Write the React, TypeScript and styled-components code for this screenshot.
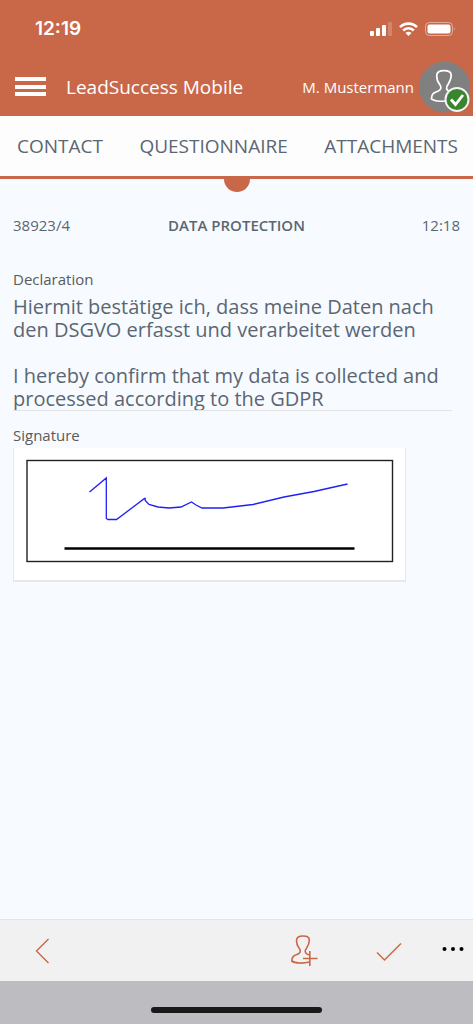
import React from "react";
import styled, { createGlobalStyle } from "styled-components";

const accent = "#c96849";
const ink = "#5b6673";

const GlobalStyle = createGlobalStyle`
  *, *::before, *::after { box-sizing: border-box; }
  body {
    margin: 0;
    background: #f7fbff;
    color: ${ink};
    font-family: "Open Sans", "Noto Sans", sans-serif;
  }
  button, textarea { font: inherit; color: inherit; }
`;

const Screen = styled.div`
  display: flex;
  flex-direction: column;
  min-height: 100vh;
`;

const Header = styled.header`
  background: ${accent};
  color: #fff;
`;

const StatusBar = styled.div`
  display: flex;
  align-items: center;
  justify-content: space-between;
  height: 58px;
  padding: 0 17px 0 35px;
`;

const Clock = styled.time`
  font-family: Inter, sans-serif;
  font-size: 19px;
  font-weight: 600;
  line-height: 26px;
`;

const StatusIcons = styled.div`
  display: flex;
  align-items: center;
  gap: 7px;
`;

const TitleBar = styled.div`
  display: flex;
  align-items: center;
  height: 58px;
  padding: 0 3px 0 15px;
`;

const IconButton = styled.button`
  display: flex;
  align-items: center;
  justify-content: center;
  flex: none;
  padding: 0;
  border: 0;
  background: none;
  cursor: pointer;
`;

const AppTitle = styled.h1`
  flex: 1;
  margin: 0 0 0 20px;
  font-size: 19px;
  font-weight: 400;
  line-height: 26px;
  white-space: nowrap;
`;

const UserName = styled.span`
  margin-right: 5px;
  font-size: 15px;
  line-height: 22px;
  white-space: nowrap;
`;

const Tabs = styled.nav`
  position: relative;
  display: flex;
  align-items: center;
  justify-content: space-between;
  height: 63px;
  padding: 0 15px 0 17px;
  background: #fdfdfd;
  border-bottom: 3px solid ${accent};

  &::after {
    content: "";
    position: absolute;
    top: calc(100% + 3px);
    left: 50%;
    width: 26px;
    height: 13px;
    margin-left: -13px;
    border-radius: 0 0 13px 13px;
    background: ${accent};
  }
`;

const Tab = styled.a`
  color: ${ink};
  font-size: 19px;
  line-height: 26px;
  text-decoration: none;
  white-space: nowrap;
`;

const Content = styled.main`
  flex: 1;
  padding: 35px 13px 24px;
`;

const Summary = styled.div`
  display: grid;
  grid-template-columns: 1fr auto 1fr;
  font-size: 15px;
  line-height: 22px;
`;

const PageTitle = styled.h2`
  margin: 0;
  font-size: 15px;
  font-weight: 600;
`;

const SummaryEnd = styled.time`
  text-align: right;
`;

const Field = styled.div`
  display: flex;
  flex-direction: column;
`;

const Label = styled.label`
  color: #5a5a5a;
  font-size: 15px;
  line-height: 22px;
`;

const Declaration = styled(Field)`
  margin: 32px 8px 13px 0;
`;

const DeclarationText = styled.textarea`
  display: block;
  width: 100%;
  margin-top: 5px;
  padding: 0;
  border: 0;
  border-bottom: 1px solid #e2e4e6;
  border-radius: 0;
  outline: 0;
  background: none;
  font-size: 20px;
  line-height: 23px;
  overflow: hidden;
  resize: none;
`;

const SignatureLabel = styled(Label).attrs({ as: "span" })``;

const SignatureBox = styled.div`
  width: 100%;
  max-width: 393px;
  margin-top: 2px;
  border: 1px solid #e5e7e9;
  border-top: 0;
  border-bottom-width: 2px;
  background: #fff;

  svg { display: block; width: 100%; height: auto; }
`;

const Toolbar = styled.footer`
  display: flex;
  align-items: center;
  height: 62px;
  padding: 0 9px 0 26px;
  border-top: 1px solid #e3e4e6;
  background: #f1f1f1;
  color: ${accent};
`;

const Actions = styled.div`
  display: flex;
  align-items: center;
  gap: 58px;
  margin-left: auto;
`;

const MoreButton = styled(IconButton)`
  margin-left: 40px;
  color: #000;
`;

const HomeArea = styled.div`
  display: flex;
  justify-content: center;
  height: 43px;
  padding-top: 26px;
  background: #bdbcc1;
`;

const HomeBar = styled.div`
  width: 36%;
  height: 6px;
  border-radius: 3px;
  background: #191919;
`;

const SignalIcon = () => (
  <svg width="22" height="14" viewBox="0 0 22 14" fill="currentColor" aria-hidden="true">
    <rect x="0" y="9" width="4" height="5" rx="1" />
    <rect x="6" y="6" width="4" height="8" rx="1" />
    <rect x="12" y="3" width="4" height="11" rx="1" />
    <rect x="18" y="0" width="4" height="14" rx="1" opacity="0.2" />
  </svg>
);

const WifiIcon = () => (
  <svg width="19" height="14" viewBox="0 0 19 14" fill="none" stroke="currentColor" strokeWidth="2.6" aria-hidden="true">
    <path d="M1 5.200 A12 12 0 0 1 18 5.200" />
    <path d="M4.200 8.500 A7.500 7.500 0 0 1 14.800 8.500" />
    <path d="M9.500 14 L6.500 11 A4.200 4.200 0 0 1 12.500 11 Z" fill="currentColor" stroke="none" />
  </svg>
);

const BatteryIcon = () => (
  <svg width="31" height="14" viewBox="0 0 31 14" aria-hidden="true">
    <rect x="0.5" y="0.5" width="27" height="13" rx="4" fill="none" stroke="#fff" opacity="0.45" />
    <rect x="2.500" y="2.500" width="23" height="9" rx="2" fill="#fff" />
    <path d="M29 5 Q30.500 7 29 9 Z" fill="#fff" opacity="0.5" />
  </svg>
);

const MenuIcon = () => (
  <svg width="31" height="20" viewBox="0 0 31 20" fill="#fff" aria-hidden="true">
    <rect width="31" height="4" />
    <rect y="8" width="31" height="4" />
    <rect y="15" width="31" height="4" />
  </svg>
);

const personPath =
  "M18.500 20 C15.500 19.500 13.500 17.500 14.500 15 C16 12 18.500 9.500 18.300 5 C18.300 2 16.500 1 12 1 C7.500 1 5.500 2.500 5.500 5.500 C5.500 8.500 6 10.500 8 13 C10 15.500 9.500 18 7 19 C3 20.500 1 21 0.800 26 C4 28.500 12 28.700 18.500 27";

const Avatar = () => (
  <svg width="51" height="52" viewBox="0 0 51 52" fill="none" aria-hidden="true">
    <circle cx="25.500" cy="26" r="25.500" fill="#808080" />
    <path transform="translate(11.500 8.500) scale(1.130)" d={personPath} stroke="#fff" strokeWidth="1.5" />
    <circle cx="38" cy="38.500" r="11.500" fill="#37862d" stroke="#f3f3f3" strokeWidth="2" />
    <path d="M32 38.500 L36.500 43.500 L44 34" stroke="#fff" strokeWidth="2.8" />
  </svg>
);

const BackIcon = () => (
  <svg width="32" height="32" viewBox="0 0 32 32" fill="none" stroke="currentColor" strokeWidth="1.4" aria-hidden="true">
    <path d="M22.500 4 L10.500 16 L22.500 28" />
  </svg>
);

const AddPersonIcon = () => (
  <svg width="27" height="32" viewBox="0 0 27 32" fill="none" stroke="currentColor" strokeWidth="1.6" aria-hidden="true">
    <path d={personPath} />
    <path d="M12 23.500 H26.500 M18.800 16 V31" />
  </svg>
);

const CheckIcon = () => (
  <svg width="26" height="32" viewBox="0 0 26 32" fill="none" stroke="currentColor" strokeWidth="1.5" aria-hidden="true">
    <path d="M1 17.500 L8.500 25 L25 8.500" />
  </svg>
);

const MoreIcon = () => (
  <svg width="22" height="32" viewBox="0 0 22 32" fill="currentColor" aria-hidden="true">
    <circle cx="2.500" cy="14" r="2" />
    <circle cx="11" cy="14" r="2" />
    <circle cx="19.500" cy="14" r="2" />
  </svg>
);

const Signature = () => (
  <svg viewBox="0 0 391 132" fill="none" role="img" aria-label="Signature">
    <rect x="13" y="12.500" width="365.500" height="101" stroke="#222" strokeWidth="1.4" />
    <path d="M50.500 100.500 H340.500" stroke="#000" strokeWidth="2.400" />
    <path
      d="M75.500 44 L92.300 30 V70.500 L94 71.500 H102.500 L130.500 50.500 L131.200 50.500 L131.200 52.500 L135 56.500 L144 59 L155 60 L167 59 L177.500 54 L182 57 L188 60 H209 L239 56.500 L270 49 L300 43.500 L333.500 36"
      stroke="#2020f5"
      strokeWidth="1.300"
    />
  </svg>
);

const declaration =
  "Hiermit bestätige ich, dass meine Daten nach den DSGVO erfasst und verarbeitet werden\n\nI hereby confirm that my data is collected and processed according to the GDPR";

export default function App() {
  return (
    <Screen>
      <GlobalStyle />
      <Header>
        <StatusBar>
          <Clock>12:19</Clock>
          <StatusIcons>
            <SignalIcon />
            <WifiIcon />
            <BatteryIcon />
          </StatusIcons>
        </StatusBar>
        <TitleBar>
          <IconButton aria-label="Menu"><MenuIcon /></IconButton>
          <AppTitle>LeadSuccess Mobile</AppTitle>
          <UserName>M. Mustermann</UserName>
          <IconButton aria-label="Account"><Avatar /></IconButton>
        </TitleBar>
      </Header>
      <Tabs>
        <Tab href="#contact">CONTACT</Tab>
        <Tab href="#questionnaire">QUESTIONNAIRE</Tab>
        <Tab href="#attachments">ATTACHMENTS</Tab>
      </Tabs>
      <Content>
        <Summary>
          <span>38923/4</span>
          <PageTitle>DATA PROTECTION</PageTitle>
          <SummaryEnd>12:18</SummaryEnd>
        </Summary>
        <Declaration>
          <Label htmlFor="declaration">Declaration</Label>
          <DeclarationText id="declaration" rows={5} readOnly value={declaration} />
        </Declaration>
        <Field>
          <SignatureLabel>Signature</SignatureLabel>
          <SignatureBox><Signature /></SignatureBox>
        </Field>
      </Content>
      <Toolbar>
        <IconButton aria-label="Back"><BackIcon /></IconButton>
        <Actions>
          <IconButton aria-label="Add contact"><AddPersonIcon /></IconButton>
          <IconButton aria-label="Confirm"><CheckIcon /></IconButton>
        </Actions>
        <MoreButton aria-label="More"><MoreIcon /></MoreButton>
      </Toolbar>
      <HomeArea><HomeBar /></HomeArea>
    </Screen>
  );
}
